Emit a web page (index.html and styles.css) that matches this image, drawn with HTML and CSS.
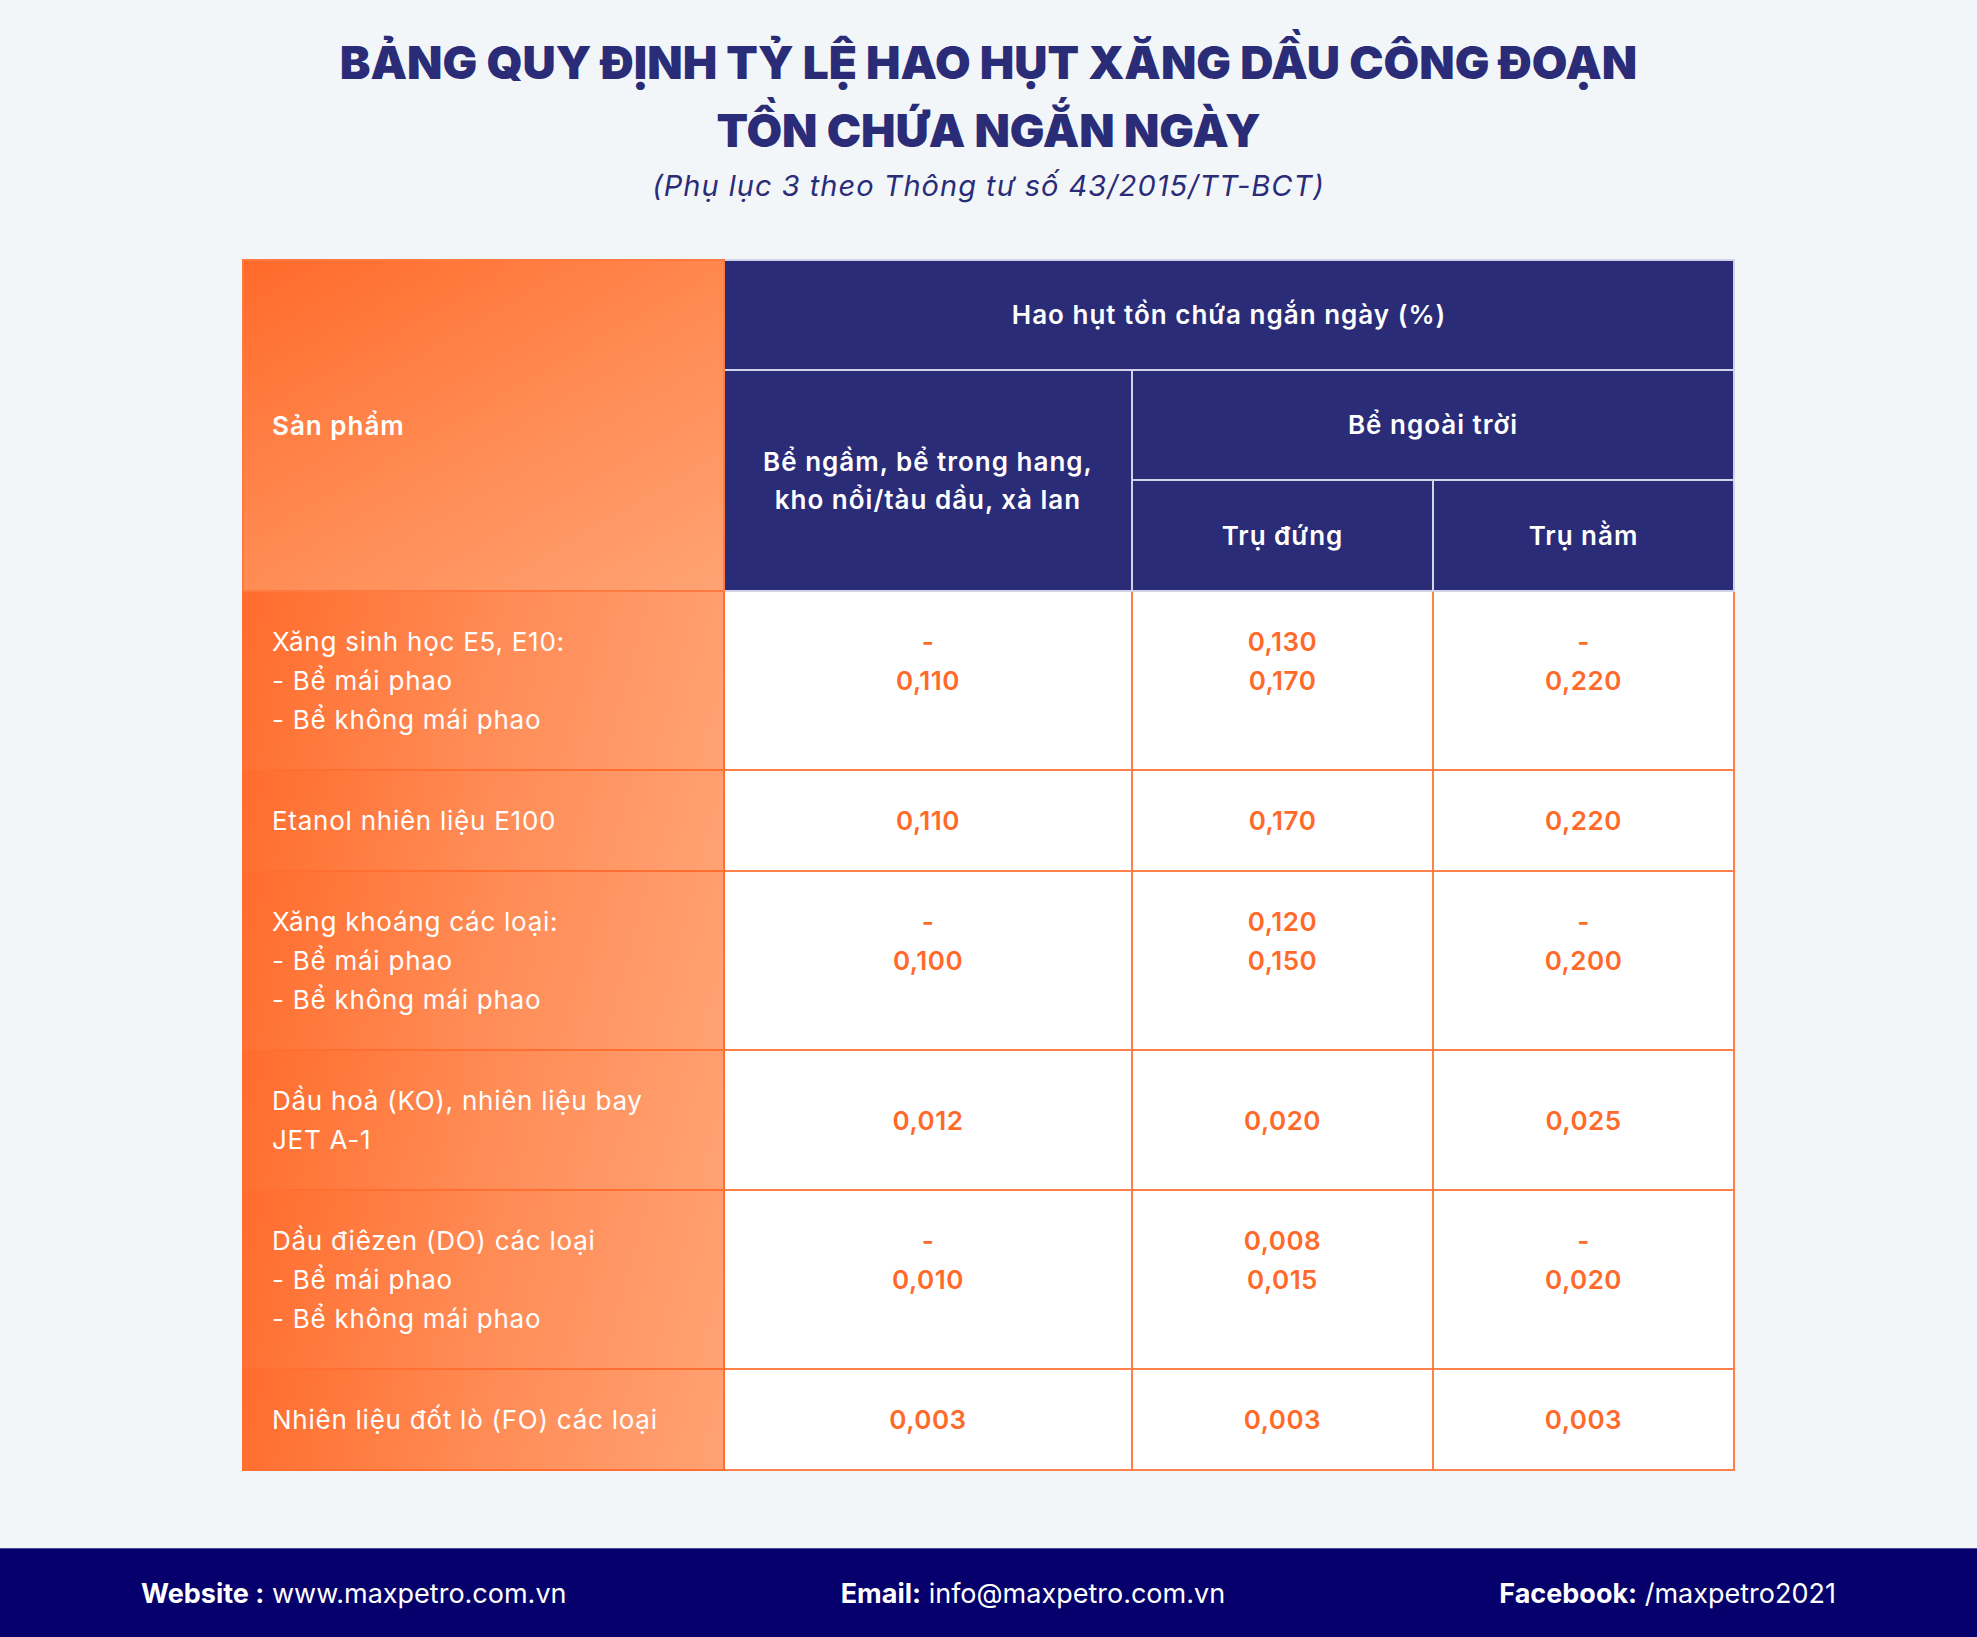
FILE: index.html
```html
<!DOCTYPE html>
<html lang="vi">
<head>
<meta charset="utf-8">
<title>Bảng quy định tỷ lệ hao hụt xăng dầu</title>
<link rel="stylesheet" href="styles.css">
</head>
<body>
<div class="page">
  <header class="heading">
    <h1 class="title">BẢNG QUY ĐỊNH TỶ LỆ HAO HỤT XĂNG DẦU CÔNG ĐOẠN<br>TỒN CHỨA NGẮN NGÀY</h1>
    <p class="subtitle">(Phụ lục 3 theo Thông tư số 43/2015/TT-BCT)</p>
  </header>

  <main class="content">
    <table class="loss-table">
      <colgroup>
        <col class="c-prod">
        <col class="c-a">
        <col class="c-b">
        <col class="c-b">
      </colgroup>
      <thead>
        <tr class="hr1">
          <th class="prod-head" rowspan="3">Sản phẩm</th>
          <th colspan="3">Hao hụt tồn chứa ngắn ngày (%)</th>
        </tr>
        <tr class="hr2">
          <th rowspan="2">Bể ngầm, bể trong hang,<br>kho nổi/tàu dầu, xà lan</th>
          <th colspan="2">Bể ngoài trời</th>
        </tr>
        <tr class="hr3">
          <th>Trụ đứng</th>
          <th>Trụ nằm</th>
        </tr>
      </thead>
      <tbody>
        <tr>
          <td class="prod">Xăng sinh học E5, E10:<br>- Bể mái phao<br>- Bể không mái phao</td>
          <td class="num">-<br>0,110<br>&nbsp;</td>
          <td class="num">0,130<br>0,170<br>&nbsp;</td>
          <td class="num">-<br>0,220<br>&nbsp;</td>
        </tr>
        <tr>
          <td class="prod">Etanol nhiên liệu E100</td>
          <td class="num">0,110</td>
          <td class="num">0,170</td>
          <td class="num">0,220</td>
        </tr>
        <tr>
          <td class="prod">Xăng khoáng các loại:<br>- Bể mái phao<br>- Bể không mái phao</td>
          <td class="num">-<br>0,100<br>&nbsp;</td>
          <td class="num">0,120<br>0,150<br>&nbsp;</td>
          <td class="num">-<br>0,200<br>&nbsp;</td>
        </tr>
        <tr>
          <td class="prod">Dầu hoả (KO), nhiên liệu bay<br>JET A-1</td>
          <td class="num">0,012</td>
          <td class="num">0,020</td>
          <td class="num">0,025</td>
        </tr>
        <tr>
          <td class="prod">Dầu điêzen (DO) các loại<br>- Bể mái phao<br>- Bể không mái phao</td>
          <td class="num">-<br>0,010<br>&nbsp;</td>
          <td class="num">0,008<br>0,015<br>&nbsp;</td>
          <td class="num">-<br>0,020<br>&nbsp;</td>
        </tr>
        <tr>
          <td class="prod">Nhiên liệu đốt lò (FO) các loại</td>
          <td class="num">0,003</td>
          <td class="num">0,003</td>
          <td class="num">0,003</td>
        </tr>
      </tbody>
    </table>
  </main>

  <footer class="footer">
    <div class="f-item"><b>Website :</b> www.maxpetro.com.vn</div>
    <div class="f-item"><b>Email:</b> info@maxpetro.com.vn</div>
    <div class="f-item"><b>Facebook:</b> /maxpetro2021</div>
  </footer>
</div>
</body>
</html>
```

FILE: styles.css
```css
html, body {
  margin: 0;
  padding: 0;
  height: 100%;
}

body {
  background: #f2f6f9;
  font-family: Inter, "Noto Sans", sans-serif;
  color: #2b2c78;
}

.page {
  min-height: 1637px;
  display: flex;
  flex-direction: column;
}

.heading {
  padding-top: 28px;
  text-align: center;
}

.title {
  margin: 0;
  font-size: 46px;
  line-height: 68px;
  font-weight: 900;
  color: #2b2c78;
  letter-spacing: 0;
}

.subtitle {
  margin: 2px 0 0;
  font-size: 29px;
  line-height: 40px;
  font-style: italic;
  color: #2b2c78;
  letter-spacing: 1px;
}

.content {
  padding-top: 53px;
}

.loss-table {
  margin: 0 auto;
  width: 1491px;
  table-layout: fixed;
  border-collapse: collapse;
  font-size: 26px;
}

.c-prod { width: 481px; }
.c-a { width: 408px; }
.c-b { width: 301px; }

.loss-table th {
  background: #2b2c78;
  color: #ffffff;
  font-weight: 600;
  font-size: 26px;
  letter-spacing: 1px;
  line-height: 38px;
  padding: 0;
  border: 2px solid #d2d3e6;
  text-align: center;
  vertical-align: middle;
}

.hr1 { height: 110px; }
.hr2 { height: 110px; }
.hr3 { height: 111px; }

.loss-table th.prod-head {
  text-align: left;
  padding-left: 28px;
  background: linear-gradient(150deg, #ff6a2a 0%, #ff8a52 50%, #ffa374 100%);
  border: 2px solid #ff7a40;
}

.loss-table td {
  padding: 30px 28px;
  line-height: 39px;
  vertical-align: middle;
  border: 2px solid #ff8149;
  background: #ffffff;
}

.loss-table td.prod {
  color: #ffffff;
  font-weight: 400;
  letter-spacing: 0.75px;
  background: linear-gradient(105deg, #ff6c2c 0%, #ff8b55 50%, #ffa274 100%);
  border-color: #ff6f31;
}

.loss-table td.num {
  text-align: center;
  color: #ff6a2a;
  font-weight: 600;
  letter-spacing: 0.5px;
}

.footer {
  margin-top: auto;
  height: 88px;
  background: #05006b;
  border-top: 1px solid #4a4aa0;
  color: #ffffff;
  display: flex;
  align-items: center;
  justify-content: space-between;
  padding: 0 141px;
  font-size: 27px;
}

.f-item b {
  font-weight: 700;
}
```
